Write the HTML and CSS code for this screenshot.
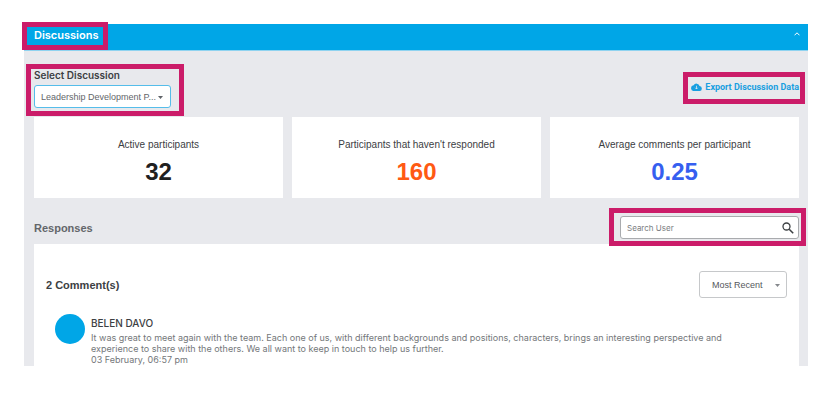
FILE: index.html
```html
<!DOCTYPE html>
<html lang="en">
<head>
<meta charset="utf-8">
<meta name="viewport" content="width=device-width, initial-scale=1">
<title>Discussions</title>
<link rel="stylesheet" href="styles.css">
</head>
<body>
<main class="panel">
  <header class="panel-header">
    <h1 class="panel-title marked marked-title">Discussions</h1>
    <button class="collapse" type="button" aria-label="Collapse">
      <svg width="6" height="4" viewBox="0 0 6 4" fill="none" stroke="currentColor"><path d="M.5 3.3 3 .8l2.5 2.5"/></svg>
    </button>
  </header>
  <div class="panel-body">
    <div class="toolbar">
      <div class="picker marked marked-picker">
        <label for="discussion">Select Discussion</label>
        <div class="select-box">
          <select id="discussion" class="discussion-select">
            <option>Leadership Development P...</option>
          </select>
          <svg class="caret" width="5" height="3" viewBox="0 0 5 3" fill="currentColor"><path d="M0 0h5L2.500 3z"/></svg>
        </div>
      </div>
      <a class="export marked marked-export" href="#export">
        <svg width="11" height="8" viewBox="0 0 20 16"><path fill="currentColor" d="M16 6.200A6.300 6.300 0 0 0 4.300 4.500 5.700 5.700 0 0 0 5.500 16H15.500A4.900 4.900 0 0 0 16 6.200z"/><path fill="none" stroke="#e8e9ed" stroke-width="1.500" d="M10 5.500v6.500M7.500 9.500l2.500 2.500 2.500-2.500"/></svg>
        Export Discussion Data
      </a>
    </div>
    <section class="stats">
      <div class="stat"><p class="stat-label">Active participants</p><p class="stat-value">32</p></div>
      <div class="stat"><p class="stat-label">Participants that haven't responded</p><p class="stat-value orange">160</p></div>
      <div class="stat"><p class="stat-label">Average comments per participant</p><p class="stat-value blue">0.25</p></div>
    </section>
    <div class="responses-bar">
      <h2>Responses</h2>
      <form class="search marked marked-search">
        <input type="text" aria-label="Search User" placeholder="Search User">
        <button type="button" aria-label="Search">
          <svg width="12" height="12" viewBox="0 0 12 12" fill="none" stroke="currentColor"><circle cx="4.500" cy="4.500" r="3.500" stroke-width="1.300"/><path d="m7.200 7.200 4 4" stroke-width="1.600"/></svg>
        </button>
      </form>
    </div>
    <section class="comments">
      <div class="comments-head">
        <h3>2 Comment(s)</h3>
        <div class="select-box">
          <select class="sort-select" aria-label="Sort comments">
            <option>Most Recent</option>
          </select>
          <svg class="caret light" width="5" height="3" viewBox="0 0 5 3" fill="currentColor"><path d="M0 0h5L2.500 3z"/></svg>
        </div>
      </div>
      <article class="comment">
        <div class="avatar"></div>
        <div class="comment-content">
          <h4>BELEN DAVO</h4>
          <p>It was great to meet again with the team. Each one of us, with different backgrounds and positions, characters, brings an interesting perspective and experience to share with the others. We all want to keep in touch to help us further.</p>
          <p><time>03 February, 06:57 pm</time></p>
        </div>
      </article>
    </section>
  </div>
</main>
</body>
</html>
```
FILE: styles.css
```css
* { box-sizing: border-box; }
body {
  margin: 0;
  padding: 24px 30px 40px 24px;
  background: #fff;
  font: 10px/12px "Liberation Sans", sans-serif;
  color: #3c4043;
}
h1, h2, h3, h4, p { margin: 0; }
button, input, select { font: inherit; color: inherit; }
button { border: 0; padding: 0; background: none; display: flex; }
svg { display: block; flex: none; }

.panel { background: #e8e9ed; }
.panel-header {
  display: flex;
  justify-content: space-between;
  align-items: flex-start;
  height: 27px;
  padding: 5px 8px 0 10px;
  background: #00a6e7;
  border-bottom: 1px solid #8fd3f0;
  color: #fff;
}
.panel-title { font: 600 11px/12px Inter, sans-serif; }
.collapse { margin-top: 3px; }
.panel-body { padding: 18px 9px 0 10px; }

/* Callout frames drawn around the controls */
.marked { position: relative; }
.marked::after {
  content: "";
  position: absolute;
  border: 5px solid #cb1c69;
  pointer-events: none;
}
.marked-title::after { inset: -7px -10px -9px -12px; }
.marked-picker::after { inset: -5px -13px -8px -8px; }
.marked-export::after { inset: -9px -6px -11px -8px; }
.marked-search::after { inset: -9px -8px -8px -12px; }

.toolbar { display: flex; justify-content: space-between; align-items: flex-start; margin-bottom: 9px; }
.picker label { display: block; margin-bottom: 4px; font: 600 10px/12px Inter, sans-serif; }
.select-box { position: relative; }
.select-box select {
  display: block;
  appearance: none;
  background: #fff;
  border-radius: 3px;
}
.discussion-select {
  width: 137px;
  height: 23px;
  padding: 0 6px;
  border: 1px solid #55bdea;
  font-size: 9px;
  color: #63666a;
}
.caret { position: absolute; right: 8px; top: 50%; margin-top: -1px; color: #5f6368; pointer-events: none; }
.caret.light { right: 7px; color: #85888c; }
.export {
  display: flex;
  align-items: center;
  gap: 3px;
  margin-top: 12px;
  font: 700 9px/12px Roboto, sans-serif;
  color: #189fe0;
  text-decoration: none;
}

.stats { display: grid; grid-template-columns: repeat(3, 1fr); gap: 9px; }
.stat {
  padding: 22px 8px 13px;
  background: #fff;
  text-align: center;
}
.stat-value { margin-top: 8px; font-size: 24px; line-height: 26px; font-weight: 700; color: #1f2020; }
.stat-value.orange { color: #ff5a13; }
.stat-value.blue { color: #365ff0; }

.responses-bar { display: flex; justify-content: space-between; align-items: center; margin: 18px 0 5px; }
.responses-bar h2 { font-size: 11px; color: #63666a; }
.search {
  display: flex;
  align-items: center;
  width: 179px;
  height: 23px;
  padding: 0 4px 0 6px;
  background: #fff;
  border: 1px solid #a9abae;
  border-radius: 3px;
}
.search input { flex: 1; min-width: 0; padding: 0; border: 0; outline: 0; background: none; font: 8px Inter, sans-serif; }
.search input::placeholder { color: #7b7e82; opacity: 1; }

.comments { padding: 27px 12px 1px; background: #fff; }
.comments-head { display: flex; justify-content: space-between; align-items: center; }
.comments-head h3 { font-size: 11px; }
.sort-select {
  width: 88px;
  height: 27px;
  padding: 0 12px;
  border: 1px solid #c6c8ca;
  font-size: 9px;
  color: #55585c;
}
.comment { display: flex; gap: 6px; margin-top: 16px; padding-left: 9px; padding-right: 48px; }
.avatar { flex: none; width: 30px; height: 30px; border-radius: 50%; background: #00a6e7; }
.comment-content { padding-top: 3px; color: #74777a; font: 9px/11px Inter, "Liberation Sans", sans-serif; }
.comment h4 { margin-bottom: 3px; font-size: 10px; line-height: 12px; font-weight: 500; color: #3c4043; }
```
